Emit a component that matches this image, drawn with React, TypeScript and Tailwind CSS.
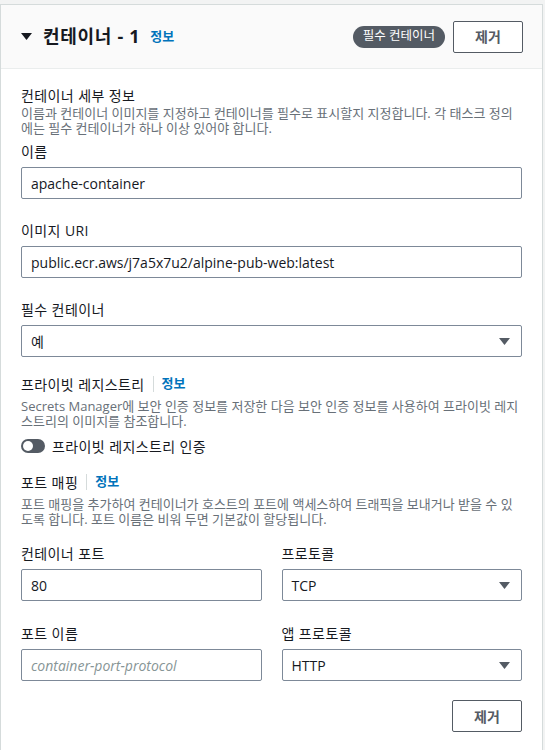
import React from 'react';

const font = { fontFamily: '"Open Sans", "Noto Sans CJK KR", sans-serif' };

function Caret({ className }: { className?: string }) {
  return (
    <svg className={className} width="11" height="7" viewBox="0 0 11 7">
      <path d="M0 0 L11 0 L5.5 7 Z" fill="currentColor" />
    </svg>
  );
}

function Label({ children }: { children: React.ReactNode }) {
  return <div className="text-[14px] leading-[20px] tracking-[0.4px] text-[#16191f]">{children}</div>;
}

function TextInput({ value, placeholder }: { value?: string; placeholder?: string }) {
  return (
    <div className="mt-[5px] flex h-[32px] items-center rounded-[2px] border border-[#7d8998] bg-white px-[9px] text-[14px]">
      {value ? (
        <span className="text-[#16191f]">{value}</span>
      ) : (
        <span className="italic text-[#879596]">{placeholder}</span>
      )}
    </div>
  );
}

function Select({ value }: { value: string }) {
  return (
    <div className="mt-[5px] flex h-[32px] items-center justify-between rounded-[2px] border border-[#7d8998] bg-white pl-[9px] pr-[11px] text-[14px] text-[#16191f]">
      <span>{value}</span>
      <Caret className="text-[#545b64]" />
    </div>
  );
}

function Heading({ title, info }: { title: string; info?: boolean }) {
  return (
    <div className="flex h-[20px] items-center text-[14px] tracking-[0.4px] text-[#16191f]">
      <span>{title}</span>
      {info && (
        <>
          <span className="mx-[8px] h-[16px] w-px bg-[#d5dbdb]" />
          <span className="text-[13px] font-bold tracking-normal text-[#0073bb]">정보</span>
        </>
      )}
    </div>
  );
}

function Desc({ children, top }: { children: React.ReactNode; top: string }) {
  return <p className={`${top} text-[13px] leading-[15px] text-[#687078]`}>{children}</p>;
}

export default function App() {
  return (
    <div className="min-h-[750px] bg-[#f2f3f3] pr-[2px] pt-[4px]" style={font}>
      <div className="min-h-[746px] border-x border-t border-[#d5dbdb] bg-white">
        <div className="flex h-[64px] items-center justify-between border-b border-[#eaeded] bg-[#fafafa] pl-[20px] pr-[19px]">
          <div className="flex items-center">
            <Caret className="text-[#16191f]" />
            <span className="ml-[11px] text-[18px] font-bold tracking-[0.7px] text-[#16191f]">컨테이너 - 1</span>
            <span className="ml-[10px] text-[13px] font-bold text-[#0073bb]">정보</span>
          </div>
          <div className="flex items-center gap-[8px]">
            <span className="flex h-[22px] items-center rounded-full bg-[#545b64] px-[10px] text-[12.5px] text-white">
              필수 컨테이너
            </span>
            <button className="flex h-[32px] w-[70px] items-center justify-center rounded-[2px] border border-[#545b64] bg-white text-[14px] font-bold text-[#545b64]">
              제거
            </button>
          </div>
        </div>

        <div className="px-[20px] pt-[16px] pb-[16px]">
          <Heading title="컨테이너 세부 정보" />
          <Desc top="mt-[1px]">
            이름과 컨테이너 이미지를 지정하고 컨테이너를 필수로 표시할지 지정합니다. 각 태스크 정의에는 필수 컨테이너가 하나 이상 있어야 합니다.
          </Desc>

          <div className="mt-[6px]">
            <Label>이름</Label>
            <TextInput value="apache-container" />
          </div>
          <div className="mt-[22px]">
            <Label>이미지 URI</Label>
            <TextInput value="public.ecr.aws/j7a5x7u2/alpine-pub-web:latest" />
          </div>
          <div className="mt-[22px]">
            <Label>필수 컨테이너</Label>
            <Select value="예" />
          </div>

          <div className="mt-[17px]">
            <Heading title="프라이빗 레지스트리" info />
            <Desc top="mt-[5px]">
              Secrets Manager에 보안 인증 정보를 저장한 다음 보안 인증 정보를 사용하여 프라이빗 레지스트리의 이미지를 참조합니다.
            </Desc>
            <div className="mt-[7px] flex h-[20px] items-center">
              <span className="flex h-[14px] w-[24px] items-center rounded-full bg-[#545b64] px-[2px]">
                <span className="h-[10px] w-[10px] rounded-full bg-white" />
              </span>
              <span className="ml-[7px] text-[14px] tracking-[0.4px] text-[#16191f]">프라이빗 레지스트리 인증</span>
            </div>
          </div>

          <div className="mt-[16px]">
            <Heading title="포트 매핑" info />
            <Desc top="mt-[5px]">
              포트 매핑을 추가하여 컨테이너가 호스트의 포트에 액세스하여 트래픽을 보내거나 받을 수 있도록 합니다. 포트 이름은 비워 두면 기본값이 할당됩니다.
            </Desc>
          </div>

          <div className="mt-[17px] grid grid-cols-2 gap-x-[20px] gap-y-[23px]">
            <div>
              <Label>컨테이너 포트</Label>
              <TextInput value="80" />
            </div>
            <div>
              <Label>프로토콜</Label>
              <Select value="TCP" />
            </div>
            <div>
              <Label>포트 이름</Label>
              <TextInput placeholder="container-port-protocol" />
            </div>
            <div>
              <Label>앱 프로토콜</Label>
              <Select value="HTTP" />
            </div>
          </div>

          <div className="mt-[19px] flex justify-end">
            <button className="flex h-[32px] w-[70px] items-center justify-center rounded-[2px] border border-[#545b64] bg-white text-[14px] font-bold text-[#545b64]">
              제거
            </button>
          </div>
        </div>
      </div>
    </div>
  );
}
